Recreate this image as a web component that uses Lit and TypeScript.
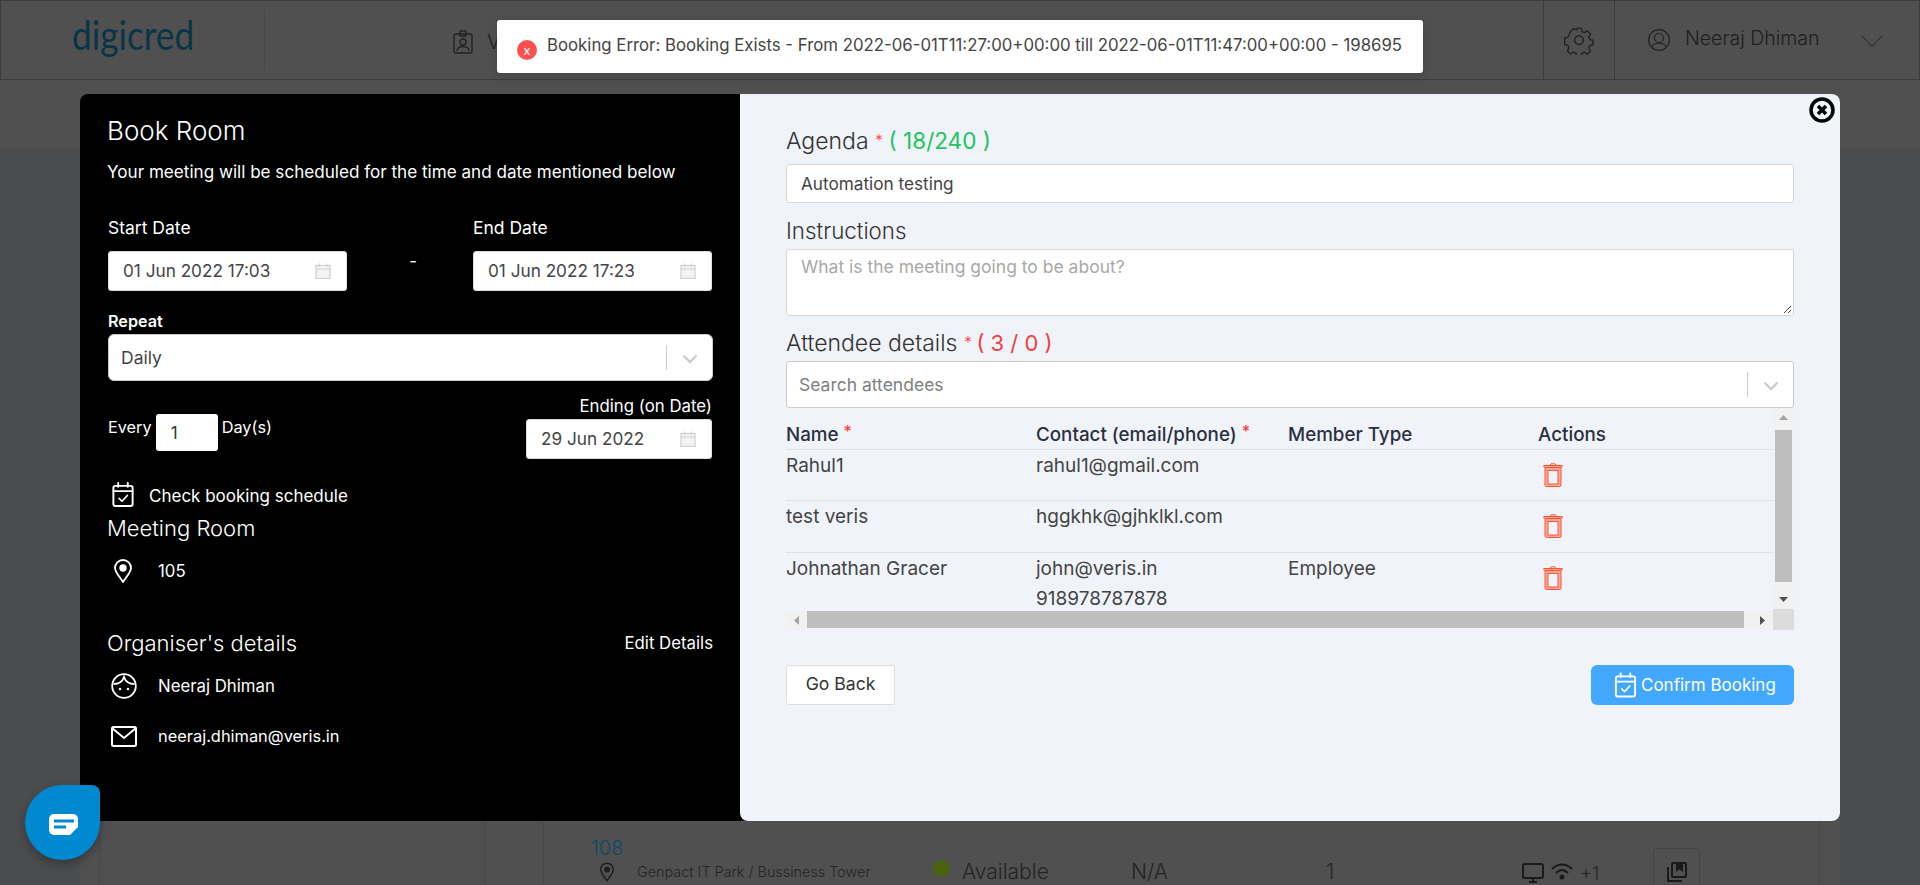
import { LitElement, html, css } from "lit";
import { customElement } from "lit/decorators.js";

const cal = html`<svg class="cal" viewBox="0 0 16 16" fill="none" stroke="#cfcfcf" stroke-width="1.2"><rect x="1" y="2.5" width="14" height="13" fill="#f4f4f4"/><path d="M1 6h14M4.5 0.5v3M11.5 0.5v3"/></svg>`;
const calCheck = (c: string, w: number, h: number) => html`<svg width=${w} height=${h} viewBox="0 0 24 26" fill="none" stroke=${c} stroke-width="2" stroke-linejoin="round" stroke-linecap="round"><rect x="2" y="4" width="20" height="21" rx="2"/><path d="M2 9.5h20M7 1v4M17 1v4"/><path d="M8 17l3 3 5.500-6" stroke-width="1.700"/></svg>`;
const pin = (c: string, w: number, h: number) => html`<svg width=${w} height=${h} viewBox="0 0 20 24" fill="none" stroke=${c} stroke-width="1.800"><path d="M10 23C6 17 2 13 2 9a8 8 0 0 1 16 0c0 4-4 8-8 14z" stroke-linejoin="round"/><circle cx="10" cy="9" r="2.800" fill=${c}/></svg>`;
const chev = html`<svg class="chev" viewBox="0 0 16 10" fill="none" stroke="#ccc" stroke-width="2.400"><path d="M1.500 1.500L8 8l6.500-6.500"/></svg>`;
const trash = html`<svg class="trash" width="20" height="24" viewBox="0 0 20 24" fill="#ffab9b" stroke="#ff5330" stroke-width="1"><path d="M7 2.200L8 .8h4l1 1.400" fill="none"/><path d="M.8 2.500h18.400v1.500H.8z" fill="none"/><path d="M2 4.500h16V22a1.500 1.500 0 0 1-1.500 1.500h-13A1.500 1.500 0 0 1 2 22z"/><rect x="5" y="7.500" width="10" height="13.500" fill="#f0f3f9"/></svg>`;

@customElement("app-root")
export class AppRoot extends LitElement {
  static styles = css`
    :host { display: block; position: relative; width: 100%; height: 885px; overflow: hidden; background: #4b4c4e; font-family: Inter, "Noto Sans", sans-serif; font-weight: 400; color: #333; }
    * { box-sizing: border-box; }
    svg { display: block; flex: none; }

    .page { display: flex; flex-direction: column; height: 885px; }
    .hdr { display: flex; height: 80px; flex: none; background: #505050; border: 1px solid #3d3d3d; color: #1e1e1e; }
    .logo-box { width: 264px; height: 60px; margin-top: 9px; padding-left: 71px; border-right: 1px solid #484848; font-family: Lato, sans-serif; font-size: 40px; line-height: 50px; color: #0a3447; }
    .logo-box span { display: block; transform: scaleX(.88); transform-origin: left; }
    .nav { display: flex; align-items: flex-start; gap: 14px; margin-left: 188px; padding-top: 29px; font-size: 20px; line-height: 24px; flex: 1; font-weight: 300; }
    .gear { width: 71px; border-left: 1px solid #3d3d3d; display: flex; justify-content: center; padding-top: 24px; }
    .user { width: 305px; border-left: 1px solid #3d3d3d; display: flex; align-items: flex-start; padding: 28px 0 0 33px; font-size: 19.500px; line-height: 20px; font-weight: 300; }
    .user span { margin: -1px 39px 0 15px; width: 137px; white-space: nowrap; }
    .user svg:last-child { margin-top: 6px; }
    .band { height: 68px; flex: none; background: #505050; }
    .main { flex: 1; margin: 0 80px; background: #505050; display: grid; grid-template-columns: 20px 385px 59px 1fr 20px; }
    .main > div { border-right: 1px solid #484848; }
    .main > div:last-child { border: 0; }
    .row { display: flex; padding: 688px 0 0 47px; color: #242424; font-weight: 300; }
    .room { width: 342px; }
    .room b { display: block; font-weight: 300; font-size: 20px; line-height: 24px; color: #0c4a66; }
    .loc { display: flex; gap: 22px; align-items: center; padding-left: 8px; font-size: 14.400px; line-height: 18px; margin-top: 2px; white-space: nowrap; }
    .status { width: 198px; display: flex; gap: 12px; font-size: 21px; line-height: 24px; padding-top: 24px; }
    .dot { width: 17px; height: 17px; border-radius: 50%; background: #4a6310; }
    .na { width: 195px; font-size: 21px; line-height: 24px; padding-top: 24px; }
    .cnt { width: 196px; font-size: 21px; line-height: 24px; padding-top: 24px; }
    .amen { width: 131px; display: flex; gap: 7px; padding-top: 27px; font-size: 18.500px; line-height: 20px; }
    .save { width: 47px; height: 60px; border: 1px solid #444; border-radius: 3px; margin-top: 12px; padding: 13px 0 0 13px; }

    .toast { position: absolute; left: 497px; top: 20px; width: 926px; height: 53px; background: #fff; border-radius: 3px; display: flex; gap: 10px; padding: 20px 0 0 20px; box-shadow: 0 3px 12px rgba(0,0,0,.15); font-size: 16.800px; line-height: 20px; color: #444; }
    .toast i { width: 20px; height: 20px; border-radius: 50%; background: #ff5050; color: #fff; font: 400 13px/20px Lato, sans-serif; text-align: center; }
    .toast span { margin-top: -5px; white-space: nowrap; }

    .chat { position: absolute; left: 25px; top: 785px; width: 75px; height: 75px; background: #0089d0; border-radius: 50% 8px 50% 50% / 50% 8px 50% 50%; box-shadow: 0 4px 10px rgba(0,0,0,.3); display: flex; align-items: center; justify-content: center; padding: 3px 0 0 2px; }

    .modal { position: absolute; left: 80px; top: 94px; width: 1760px; height: 727px; display: flex; background: #000; border-radius: 8px; }
    .left { width: 660px; padding: 21px 28px 0; color: #fff; font-size: 16.800px; line-height: 20px; white-space: nowrap; }
    .right { width: 1100px; height: 727px; background: #f0f3f9; border-radius: 0 8px 8px 8px; padding: 32px 46px 0; position: relative; }
    .close { position: absolute; right: 5px; top: 3px; }

    h1 { margin: 0 0 0 -1px; font-size: 26px; line-height: 32px; font-weight: 300; }
    .sub { margin-top: 14px; margin-left: -1px; line-height: 22px; font-size: 17.100px; }
    .dates { display: flex; justify-content: space-between; margin-top: 35px; }
    .dash { padding-top: 33px; width: 20px; margin-left: 6px; text-align: center; }
    .date { width: 239px; font-size: 17.500px; }
    .inp { display: flex; align-items: center; justify-content: space-between; background: #fff; color: #444; height: 40px; border-radius: 3px; padding: 0 15px 0 14px; margin-top: 13px; border: 1px solid #ddd; font-size: 17.200px; }
    .cal { width: 16px; height: 16px; }
    .lbl-b { margin-top: 20px; font-weight: 600; font-size: 16.200px; }
    .sel { display: flex; align-items: center; height: 47px; background: #fff; color: #444; border-radius: 6px; border: 1px solid #ccc; padding-left: 12px; margin-top: 3px; font-size: 17.500px; width: 605px; }
    .sel span { flex: 1; }
    .sel u { width: 1px; height: 25px; background: #ccc; }
    .chev { width: 16px; height: 10px; margin: 2px 14px 0 15px; }
    .every { display: flex; justify-content: space-between; align-items: flex-start; margin-top: 15px; }
    .ev-l { display: flex; gap: 4px; margin-top: 18px; font-size: 16.300px; }
    .ev-l span { margin-top: 3px; }
    .ev-i { width: 62px; height: 37px; background: #fff; color: #333; border-radius: 3px; padding: 9px 0 0 15px; font-size: 17px; }
    .ev-r { width: 186px; text-align: right; display: flex; flex-direction: column; }
    .ev-r .inp { margin-top: 3px; text-align: left; }
    .chk { display: flex; align-items: center; gap: 15px; margin-top: 23px; padding-left: 3px; font-size: 17px; }
    .chk span { margin-top: 2px; margin-left: -1px; }
    h2 { margin: 0 0 0 -1px; font-size: 22px; line-height: 30px; font-weight: 300; }
    .mt7 { margin-top: 6px; }
    .info { display: flex; align-items: center; gap: 0; }
    .ico { width: 50px; display: flex; padding-left: 3px; }
    .ico.p { padding-left: 5px; }
    .r105 { margin-top: 16px; height: 24px; }
    .org { display: flex; justify-content: space-between; align-items: center; margin-top: 45px; }
    .org span { margin-right: -1px; }
    .r-n { margin-top: 15px; height: 26px; }
    .r-m { margin-top: 27px; height: 20px; font-size: 16.400px; }

    .lab { font-size: 23px; line-height: 30px; color: #333; font-weight: 300; }
    .lab.s1 { margin-top: 13px; font-size: 22.300px; }
    .lab.s2 { margin-top: 12px; }
    .req { color: #ff3b3b; font-size: 16px; line-height: 0; vertical-align: 3px; }
    .ok { color: #22c55e; font-weight: 400; font-size: 22.500px; margin-left: -1px; }
    .bad { color: #f04040; font-weight: 400; font-size: 22px; margin-left: -2px; }
    .field { height: 39px; margin-top: 8px; background: #fff; border: 1px solid #d8d8d8; border-radius: 3px; padding: 0 14px; display: flex; align-items: center; font-size: 17.200px; color: #444; }
    .ta { height: 67px; margin-top: 3px; background: #fff; border: 1px solid #d8d8d8; border-radius: 3px; padding: 7px 14px; color: #a8a8a8; font-size: 17.500px; line-height: 20px; position: relative; }
    .grip { position: absolute; right: 1px; bottom: 1px; }
    .search { margin-top: 3px; height: 47px; padding: 0 0 0 12px; border-color: #ccc; color: #808080; font-size: 17.500px; width: auto; }
    .tb { display: grid; grid-template-columns: 987px 21px; grid-template-rows: 201px 2px 19px; height: 222px; }
    .tbl { grid-row: 1 / 3; overflow: hidden; width: 987px; font-size: 19px; line-height: 20px; color: #444; }
    .tr { display: grid; grid-template-columns: 250px 252px 250px 235px; border-bottom: 1px solid #dfe3e8; height: 51px; padding-top: 6px; }
    .tr:nth-child(3) { height: 52px; }
    .tr:last-child { border: 0; height: 60px; }
    .th { height: 42px; padding-top: 17px; font-weight: 500; color: #2a3040; font-size: 18.800px; white-space: nowrap; }
    .th .req { vertical-align: 4px; }
    .tr .trash { margin: 7px 0 0 5px; }
    .line2 { margin-top: 10px; }
    .vs { grid-column: 2; grid-row: 1; background: #f1f1f1; width: 19px; margin-left: 1px; display: flex; flex-direction: column; align-items: center; justify-content: space-between; position: relative; }
    .vt { width: 17px; height: 152px; background: #bebebe; position: absolute; top: 22px; left: 1px; }
    .corner { grid-column: 2; grid-row: 2 / 4; background: #dcdcdc; }
    .hs { grid-column: 1; grid-row: 3; background: #f1f1f1; display: flex; align-items: flex-start; height: 19px; position: relative; }
    .ht { width: 937px; height: 17px; margin-left: 21px; background: #bebebe; }
    .hl, .hr { position: absolute; top: 5px; }
    .hl { left: 8px; }
    .hr { right: 8px; }
    .va { margin: 7px 0 0; }
    .vb { margin: 0 0 7px; }
    .acts { display: flex; justify-content: space-between; margin-top: 35px; }
    .back { width: 109px; height: 40px; background: #fff; border: 1px solid #ddd; border-radius: 3px; font-size: 17.600px; line-height: 36px; text-align: center; }
    .conf { width: 203px; height: 40px; background: #42a8ff; color: #fff; border-radius: 6px; display: flex; align-items: center; gap: 4px; padding-left: 23px; font-size: 17px; white-space: nowrap; }
  `;

  row(name: string, contact: unknown, type = "") {
    return html`<div class="tr"><div>${name}</div><div>${contact}</div><div>${type}</div><div>${trash}</div></div>`;
  }

  render() {
    return html`
      <div class="page">
        <div class="hdr">
          <div class="logo-box"><span>digicred</span></div>
          <div class="nav">
            <svg width="20" height="24" viewBox="0 0 20 24" fill="none" stroke="#222" stroke-width="1.400"><rect x="1" y="4" width="18" height="19" rx="2"/><rect x="7" y="1" width="6" height="5" rx="1"/><circle cx="10" cy="12" r="3"/><path d="M4 21c0-6 12-6 12 0"/></svg>
            <span>V</span>
          </div>
          <div class="gear">
            <svg width="30" height="30" viewBox="0 0 24 24" fill="none" stroke="#222" stroke-width="1.200" stroke-linejoin="round"><circle cx="12" cy="12" r="3.500"/><path d="M10 1.500h4l.6 3 2.300 1 2.600-1.600 2.800 2.800-1.700 2.600 1 2.300 2.900.6v0l-.1 4-2.800.6-1 2.300 1.600 2.600-2.800 2.800-2.600-1.700-2.300 1-.6 2.700h-4l-.6-2.800-2.300-1-2.600 1.700-2.800-2.800 1.600-2.600-1-2.300-2.900-.6V10l2.900-.6 1-2.300L4.600 4.500l2.800-2.800L10 3.300l-.0 0z" transform="translate(1.200 1.200) scale(.9)"/></svg>
          </div>
          <div class="user">
            <svg width="22" height="22" viewBox="0 0 22 22" fill="none" stroke="#222" stroke-width="1.200"><circle cx="11" cy="11" r="10.400"/><circle cx="11" cy="9" r="4.500"/><path d="M3.500 18c3-5 12-5 15 0"/></svg>
            <span>Neeraj Dhiman</span>
            <svg width="22" height="12" viewBox="0 0 22 12" fill="none" stroke="#222" stroke-width="1"><path d="M.5.5L11 11.500 21.500.5"/></svg>
          </div>
        </div>
        <div class="band"></div>
        <div class="main">
          <div></div><div></div><div></div>
          <div class="row">
            <div class="room">
              <b>108</b>
              <div class="loc">${pin("#1e1e1e", 16, 20)}<span>Genpact IT Park / Bussiness Tower</span></div>
            </div>
            <div class="status"><i class="dot"></i><span>Available</span></div>
            <div class="na">N/A</div>
            <div class="cnt">1</div>
            <div class="amen">
              <svg width="22" height="20" viewBox="0 0 22 20" fill="none" stroke="#1a1a1a" stroke-width="2"><rect x="1" y="1" width="20" height="14" rx="2"/><path d="M11 15v4M7 19h8"/></svg>
              <svg width="22" height="18" viewBox="0 0 22 18" fill="none" stroke="#1a1a1a" stroke-width="2"><path d="M1 6c6-6 14-6 20 0M5 10c4-4 8-4 12 0"/><circle cx="11" cy="14" r="1.500" fill="#1a1a1a"/></svg>
              <span>+1</span>
            </div>
            <div class="save">
              <svg width="20" height="20" viewBox="0 0 20 20" fill="none" stroke="#1a1a1a" stroke-width="2"><rect x="5" y="1" width="14" height="14" rx="1"/><path d="M1 5v14h14"/><path d="M10 1v7l2.500-2L15 8V1" fill="#1a1a1a"/></svg>
            </div>
          </div>
          <div></div>
        </div>
      </div>

      <div class="modal">
        <section class="left">
          <h1>Book Room</h1>
          <div class="sub">Your meeting will be scheduled for the time and date mentioned below</div>
          <div class="dates">
            <div class="date">Start Date<div class="inp"><span>01 Jun 2022 17:03</span>${cal}</div></div>
            <div class="dash">-</div>
            <div class="date">End Date<div class="inp"><span>01 Jun 2022 17:23</span>${cal}</div></div>
          </div>
          <div class="lbl-b">Repeat</div>
          <div class="sel"><span>Daily</span><u></u>${chev}</div>
          <div class="every">
            <div class="ev-l"><span>Every</span><div class="ev-i">1</div><span>Day(s)</span></div>
            <div class="ev-r">Ending (on Date)<div class="inp"><span>29 Jun 2022</span>${cal}</div></div>
          </div>
          <div class="chk">${calCheck("#fff", 24, 25)}<span>Check booking schedule</span></div>
          <h2 class="mt7">Meeting Room</h2>
          <div class="info r105"><div class="ico p">${pin("#fff", 20, 24)}</div><span>105</span></div>
          <div class="org"><h2>Organiser's details</h2><span>Edit Details</span></div>
          <div class="info r-n"><div class="ico">
            <svg width="26" height="26" viewBox="0 0 26 26" fill="none" stroke="#fff" stroke-width="1.800"><circle cx="13" cy="13" r="11.800"/><path d="M2.500 11c5 0 9-2.500 10.500-7 1.500 4.500 5.500 7 10.500 7"/><circle cx="9" cy="16" r="1.300" fill="#fff" stroke="none"/><circle cx="17" cy="16" r="1.300" fill="#fff" stroke="none"/></svg>
          </div><span>Neeraj Dhiman</span></div>
          <div class="info r-m"><div class="ico">
            <svg width="26" height="21" viewBox="0 0 26 21" fill="none" stroke="#fff" stroke-width="2"><rect x="1" y="1" width="24" height="19" rx="1.500"/><path d="M1 2l12 10L25 2"/></svg>
          </div><span>neeraj.dhiman@veris.in</span></div>
        </section>

        <section class="right">
          <svg class="close" width="26" height="26" viewBox="0 0 26 26"><circle cx="13" cy="13" r="11" fill="none" stroke="#000" stroke-width="3.500"/><path d="M9 9l8 8M17 9l-8 8" stroke="#000" stroke-width="3.500"/></svg>
          <div class="lab">Agenda <span class="req">*</span> <span class="ok">( 18/240 )</span></div>
          <div class="field">Automation testing</div>
          <div class="lab s1">Instructions</div>
          <div class="ta">What is the meeting going to be about?
            <svg class="grip" width="10" height="10" viewBox="0 0 10 10" stroke="#444" stroke-width="1"><path d="M9 2L2 9M9 6L6 9"/></svg>
          </div>
          <div class="lab s2">Attendee details <span class="req">*</span> <span class="bad">( 3 / 0 )</span></div>
          <div class="field sel search"><span>Search attendees</span><u></u>${chev}</div>
          <div class="tb">
            <div class="tbl">
              <div class="tr th"><div>Name <span class="req">*</span></div><div>Contact (email/phone) <span class="req">*</span></div><div>Member Type</div><div>Actions</div></div>
              ${this.row("Rahul1", "rahul1@gmail.com")}
              ${this.row("test veris", "hggkhk@gjhklkl.com")}
              ${this.row("Johnathan Gracer", html`john@veris.in<div class="line2">918978787878</div>`, "Employee")}
            </div>
            <div class="vs">
              <svg class="va" width="9" height="5" viewBox="0 0 9 5"><path d="M0 5L4.500 0 9 5z" fill="#a3a3a3"/></svg>
              <div class="vt"></div>
              <svg class="vb" width="9" height="5" viewBox="0 0 9 5"><path d="M0 0L4.500 5 9 0z" fill="#505050"/></svg>
            </div>
            <div class="corner"></div>
            <div class="hs">
              <svg class="hl" width="5" height="9" viewBox="0 0 5 9"><path d="M5 0L0 4.500 5 9z" fill="#a3a3a3"/></svg>
              <div class="ht"></div>
              <svg class="hr" width="5" height="9" viewBox="0 0 5 9"><path d="M0 0L5 4.500 0 9z" fill="#505050"/></svg>
            </div>
          </div>
          <div class="acts">
            <div class="back">Go Back</div>
            <div class="conf">${calCheck("#fff", 23, 26)}<span>Confirm Booking</span></div>
          </div>
        </section>
      </div>

      <div class="toast"><i>x</i><span>Booking Error: Booking Exists - From 2022-06-01T11:27:00+00:00 till 2022-06-01T11:47:00+00:00 - 198695</span></div>

      <div class="chat">
        <svg width="29" height="21" viewBox="0 0 29 21"><path d="M5 0h19a5 5 0 0 1 5 5v8l-8 8H5a5 5 0 0 1-5-5V5a5 5 0 0 1 5-5z" fill="#fff"/><path d="M5 7h20" stroke="#0089d0" stroke-width="3"/><path d="M5 13h12" stroke="#0089d0" stroke-width="3"/></svg>
      </div>
    `;
  }
}
